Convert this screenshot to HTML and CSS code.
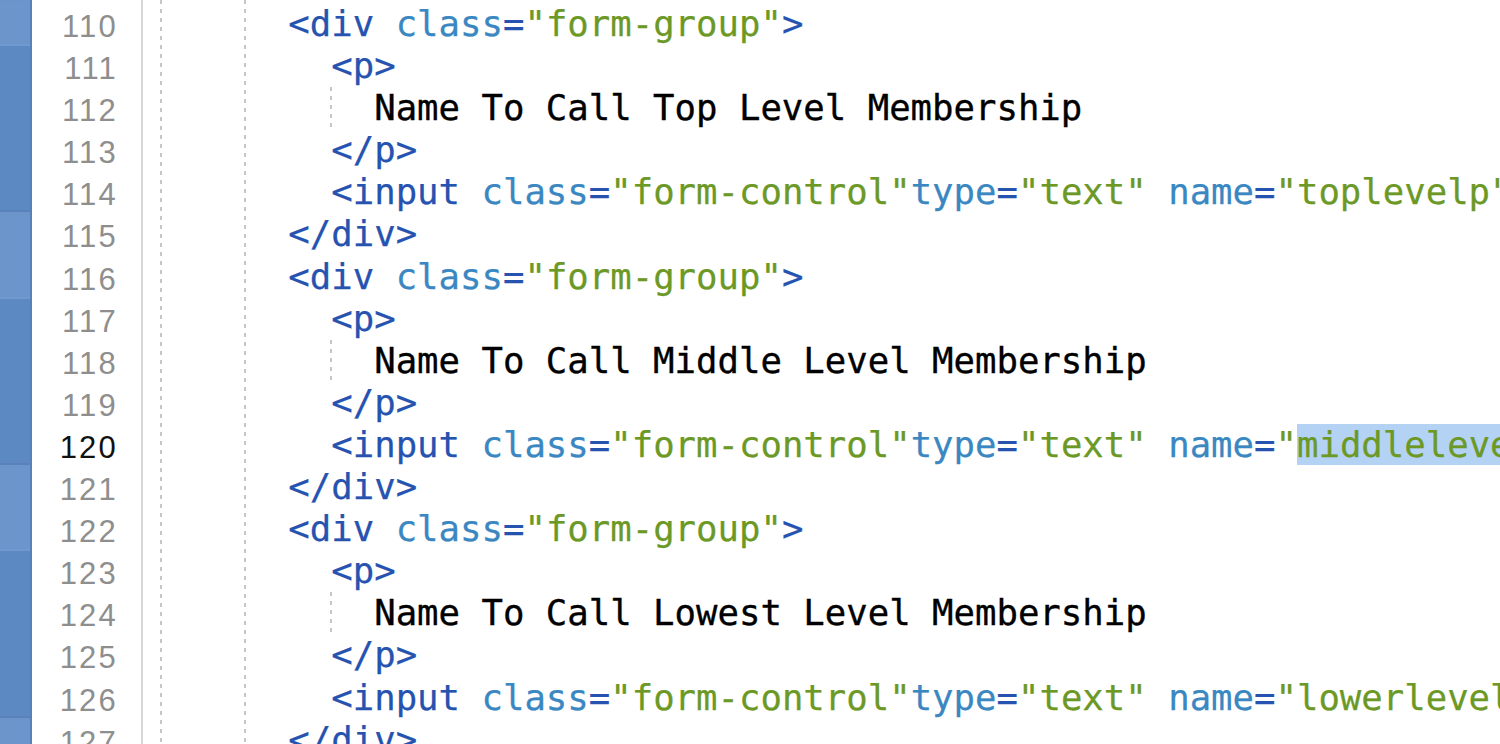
FILE: index.html
```html
<!DOCTYPE html>
<html>
<head>
<meta charset="utf-8">
<link rel="stylesheet" href="styles.css">
</head>
<body>
<div class="editor">
  <div class="fold">
    <div class="band light s1"></div>
    <div class="band dark s4"></div>
    <div class="band light s2"></div>
    <div class="band dark s4"></div>
    <div class="band light s2"></div>
    <div class="band dark s4"></div>
    <div class="band light s1"></div>
  </div>
  <div class="nums">
    <div class="n">110</div>
    <div class="n">111</div>
    <div class="n">112</div>
    <div class="n">113</div>
    <div class="n">114</div>
    <div class="n">115</div>
    <div class="n">116</div>
    <div class="n">117</div>
    <div class="n">118</div>
    <div class="n">119</div>
    <div class="n cur">120</div>
    <div class="n">121</div>
    <div class="n">122</div>
    <div class="n">123</div>
    <div class="n">124</div>
    <div class="n">125</div>
    <div class="n">126</div>
    <div class="n">127</div>
  </div>
  <div class="code">
    <div class="ln">      <span class="t">&lt;div</span> <span class="a">class</span><span class="t">=</span><span class="v">"form-group"</span><span class="t">&gt;</span></div>
    <div class="ln">        <span class="t">&lt;p&gt;</span></div>
    <div class="ln guide">          <span class="x">Name To Call Top Level Membership</span></div>
    <div class="ln">        <span class="t">&lt;/p&gt;</span></div>
    <div class="ln">        <span class="t">&lt;input</span> <span class="a">class</span><span class="t">=</span><span class="v">"form-control"</span><span class="a">type</span><span class="t">=</span><span class="v">"text"</span> <span class="a">name</span><span class="t">=</span><span class="v">"toplevelp"</span><span class="t">&gt;</span></div>
    <div class="ln">      <span class="t">&lt;/div&gt;</span></div>
    <div class="ln">      <span class="t">&lt;div</span> <span class="a">class</span><span class="t">=</span><span class="v">"form-group"</span><span class="t">&gt;</span></div>
    <div class="ln">        <span class="t">&lt;p&gt;</span></div>
    <div class="ln guide">          <span class="x">Name To Call Middle Level Membership</span></div>
    <div class="ln">        <span class="t">&lt;/p&gt;</span></div>
    <div class="ln">        <span class="t">&lt;input</span> <span class="a">class</span><span class="t">=</span><span class="v">"form-control"</span><span class="a">type</span><span class="t">=</span><span class="v">"text"</span> <span class="a">name</span><span class="t">=</span><span class="v">"<span class="sel">middlelevelp</span>"</span><span class="t">&gt;</span></div>
    <div class="ln">      <span class="t">&lt;/div&gt;</span></div>
    <div class="ln">      <span class="t">&lt;div</span> <span class="a">class</span><span class="t">=</span><span class="v">"form-group"</span><span class="t">&gt;</span></div>
    <div class="ln">        <span class="t">&lt;p&gt;</span></div>
    <div class="ln guide">          <span class="x">Name To Call Lowest Level Membership</span></div>
    <div class="ln">        <span class="t">&lt;/p&gt;</span></div>
    <div class="ln">        <span class="t">&lt;input</span> <span class="a">class</span><span class="t">=</span><span class="v">"form-control"</span><span class="a">type</span><span class="t">=</span><span class="v">"text"</span> <span class="a">name</span><span class="t">=</span><span class="v">"lowerlevelp"</span><span class="t">&gt;</span></div>
    <div class="ln">      <span class="t">&lt;/div&gt;</span></div>
  </div>
</div>
</body>
</html>
```
FILE: styles.css
```css
:root {
  --lh: 42.1px;
}
html, body {
  margin: 0;
  padding: 0;
  background: #ffffff;
  overflow: hidden;
}
.editor {
  display: flex;
  width: 1500px;
  height: 744px;
  overflow: hidden;
  padding-top: 3px;
  box-sizing: border-box;
}
.fold {
  flex: 0 0 30px;
  border-right: 2px solid #5681ba;
  display: flex;
  flex-direction: column;
  margin-top: -3px;
  padding-top: 2px;
  background: #6a94ca;
}
.band { flex: 0 0 auto; box-sizing: border-box; }
.band.light { background: #6b95cb; }
.band.dark { background: #5d89c2; border-top: 2px solid #7099cf; border-bottom: 2px solid #5a82b8; }
.s1 { height: var(--lh); }
.s2 { height: calc(var(--lh) * 2); }
.s4 { height: calc(var(--lh) * 4); }
.nums {
  flex: 0 0 86px;
  padding-right: 23px;
  border-right: 2px solid #d6d6d6;
  margin-top: -3px;
  padding-top: 3px;
  font-family: "Liberation Sans", Arial, sans-serif;
  font-size: 31px;
  letter-spacing: 2.2px;
  color: #8e8e8e;
  text-align: right;
}
.n {
  height: var(--lh);
  line-height: var(--lh);
  padding-top: 3px;
  box-sizing: border-box;
}
.n.cur { color: #111111; }
.code {
  flex: 1 1 auto;
  margin-top: -3px;
  padding-top: 3px;
  padding-left: 16.6px;
  font-family: "DejaVu Sans Mono", "Liberation Mono", monospace;
  font-size: 35.65px;
  background-image:
    repeating-linear-gradient(to bottom, #c6c6c6 0 4px, transparent 4px 9px),
    repeating-linear-gradient(to bottom, #c6c6c6 0 4px, transparent 4px 9px);
  background-size: 2px 100%, 2px 100%;
  background-position: 17px 0, 101px 0;
  background-repeat: no-repeat;
}
.ln {
  height: var(--lh);
  line-height: var(--lh);
  white-space: pre;
}
.ln.guide {
  background-image: repeating-linear-gradient(to bottom, #c6c6c6 0 4px, transparent 4px 9px);
  background-size: 2px 100%;
  background-position: 170px 0;
  background-repeat: no-repeat;
}
.t { color: #2652b0; }
.a { color: #3a87c2; }
.v { color: #6c9926; }
.x { color: #000000; -webkit-text-stroke: 0.35px #000; }
.t, .a, .v { -webkit-text-stroke: 0.25px currentColor; }
.sel { background: #b4d3f4; }
```
